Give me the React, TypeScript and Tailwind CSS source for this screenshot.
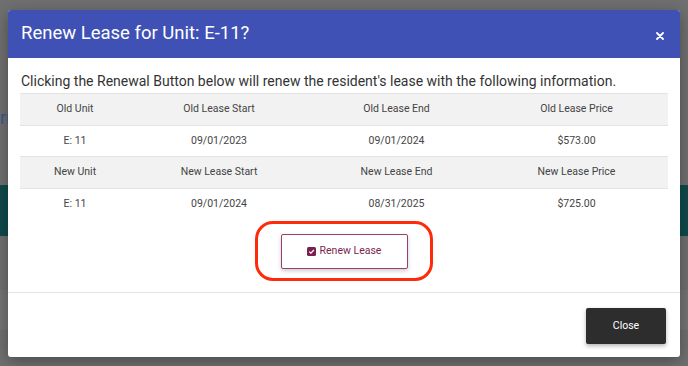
const OLD = {
  heads: ["Old Unit", "Old Lease Start", "Old Lease End", "Old Lease Price"],
  vals: ["E: 11", "09/01/2023", "09/01/2024", "$573.00"],
};
const NEW = {
  heads: ["New Unit", "New Lease Start", "New Lease End", "New Lease Price"],
  vals: ["E: 11", "09/01/2024", "08/31/2025", "$725.00"],
};

function Row({ cells, head }: { cells: string[]; head?: boolean }) {
  return (
    <div
      className={`grid grid-cols-[110px_178px_177px_183px] h-[31.5px] items-center text-[10.5px] text-[#444] border-t border-[#e3e3e3] ${
        head ? "bg-[#f2f2f2]" : "bg-white"
      }`}
    >
      {cells.map((c) => (
        <div key={c} className="text-center">
          {c}
        </div>
      ))}
    </div>
  );
}

export default function App() {
  return (
    <div className="relative w-[688px] h-[366px] overflow-hidden bg-[#707070]" style={{ fontFamily: "Roboto, 'Liberation Sans', sans-serif" }}>
      {/* page behind overlay */}
      <div className="h-[106px]" />
      <div className="h-[79px] text-[18px] leading-[24px] text-[#3d5a8c]">ri</div>
      <div className="h-[51px] bg-[#0f4b4d]" />
      <div className="h-[54px]" />
      <div className="h-[40px] bg-[#757575]" />

      {/* modal */}
      <div className="absolute left-[8px] top-[10px] w-[672px] h-[347px] bg-white rounded-[3px] shadow-[0_4px_16px_rgba(0,0,0,0.35)] flex flex-col overflow-hidden">
        <div className="h-[48px] bg-[#3f51b5] flex items-center justify-between pl-[13px] pr-[16px] shrink-0">
          <span className="text-[18.5px] text-white whitespace-nowrap">Renew Lease for Unit: E-11?</span>
          <svg width="8" height="8" viewBox="0 0 8 8" className="mt-[3px]">
            <path d="M1 1L7 7M7 1L1 7" stroke="white" strokeWidth="1.8" strokeLinecap="round" />
          </svg>
        </div>

        <div className="px-[12px] pt-[12px]">
          <p className="pl-[1px] text-[14px] text-[#333] leading-[22px] mb-[1px] whitespace-nowrap">
            Clicking the Renewal Button below will renew the resident's lease with the following information.
          </p>
          <div className="w-[648px]">
            <Row cells={OLD.heads} head />
            <Row cells={OLD.vals} />
            <Row cells={NEW.heads} head />
            <Row cells={NEW.vals} />
          </div>

          <div className="flex justify-center mt-[2px]">
            <div className="w-[178px] h-[60px] rounded-[18px] border-[3px] border-[#ff2a0a] flex items-center justify-center">
              <button className="w-[127px] h-[35px] border border-[#9b3d6d] bg-white rounded-[2px] shadow-[0_2px_4px_rgba(0,0,0,0.2)] flex items-center justify-center gap-[4px] text-[10.5px] text-[#7b1f4f]">
                <svg width="9" height="9" viewBox="0 0 9 9">
                  <rect width="9" height="9" rx="1.5" fill="#7b1f4f" />
                  <path d="M2.2 4.6L3.9 6.2L6.9 3" stroke="white" strokeWidth="1.3" fill="none" />
                </svg>
                Renew Lease
              </button>
            </div>
          </div>
        </div>

        <div className="mt-[11px] border-t border-[#e3e3e3] flex justify-end pt-[15px] pr-[14px]">
          <button className="w-[80px] h-[36px] bg-[#2d2d2d] text-white text-[10.5px] rounded-[2px] shadow-[0_2px_4px_rgba(0,0,0,0.3)]">
            Close
          </button>
        </div>
      </div>
    </div>
  );
}
